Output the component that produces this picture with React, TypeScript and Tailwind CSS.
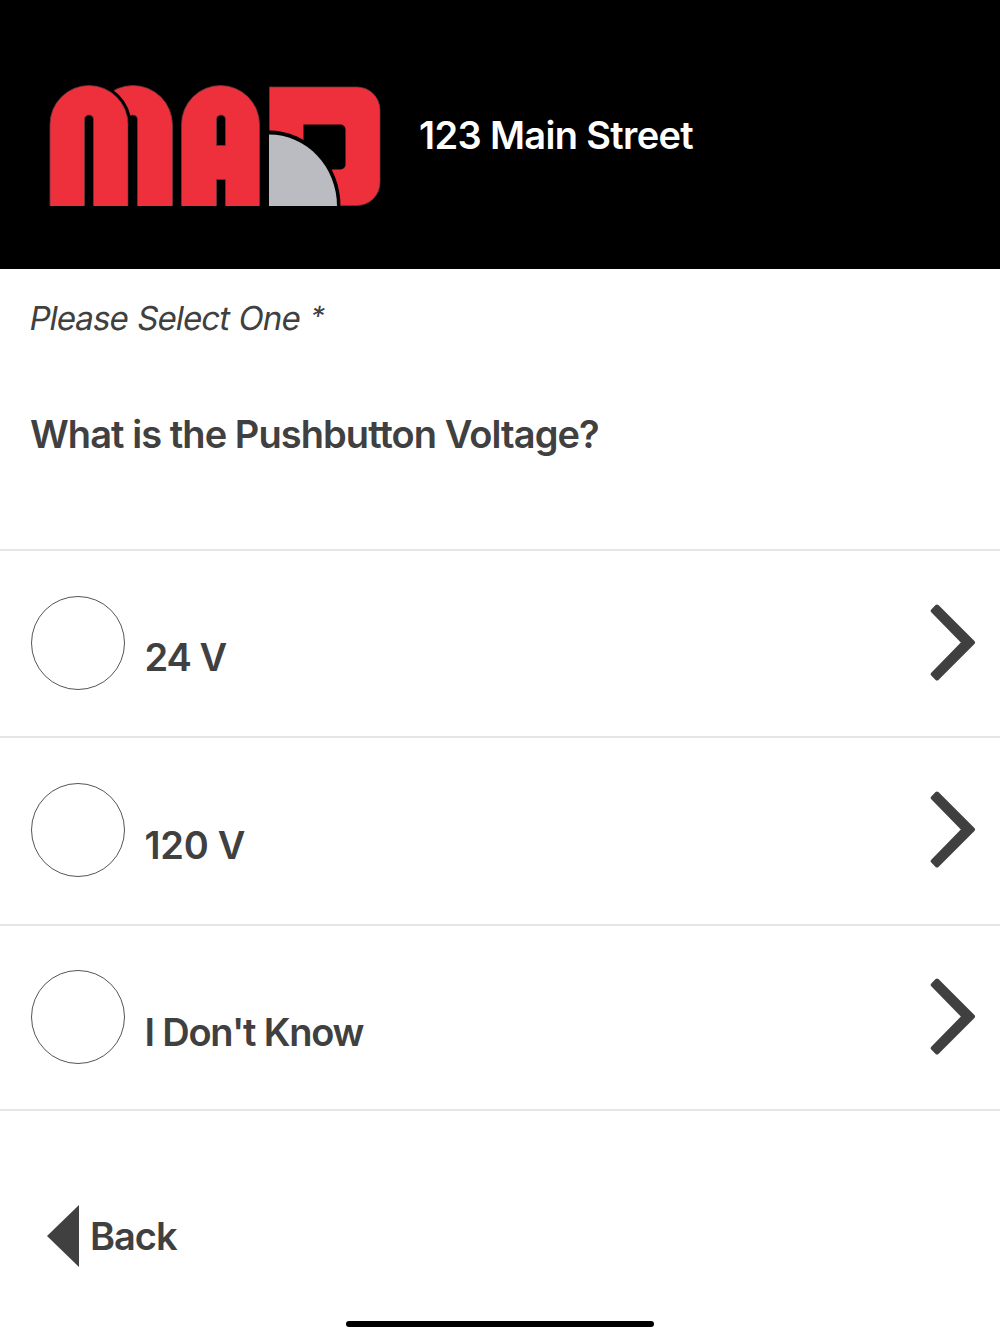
const options = [
  { label: "24 V", tracking: "tracking-[-1px]" },
  { label: "120 V", tracking: "tracking-[-0.3px]" },
  { label: "I Don't Know", tracking: "tracking-[-1.2px]" },
];

function Logo() {
  return (
    <svg viewBox="0 0 332 122" className="h-[122px] w-[332px] shrink-0">
      <defs>
        <clipPath id="logo-base">
          <rect width="332" height="121" />
        </clipPath>
        <clipPath id="logo-block">
          <rect x="220" width="112" height="121" />
        </clipPath>
      </defs>
      <g clipPath="url(#logo-base)" fill="#ee303c" stroke="#6b3a3e" strokeWidth="0.8">
        {/* double arch */}
        <rect x="44.5" y="0.5" width="79" height="180" rx="39.5" />
        <rect x="79" y="30" width="9.5" height="100" rx="4.5" fill="#000" />
        <circle cx="40" cy="40" r="42.5" fill="#000" stroke="none" />
        <rect x="1" y="0.5" width="78" height="180" rx="39" />
        <rect x="79.4" y="40" width="3" height="90" fill="#000" stroke="none" />
        <rect x="35.5" y="30" width="9" height="100" rx="4.5" fill="#000" />

        {/* single arch */}
        <rect x="132.5" y="0.5" width="78" height="180" rx="39" />
        <path d="M167.5 60.5V34.5a4.5 4.5 0 0 1 9 0v26z" fill="#000" />
        <rect x="167.5" y="94.5" width="9" height="40" fill="#000" />
      </g>

      {/* block with quarter disc */}
      <g clipPath="url(#logo-block)">
        <path
          d="M220.5 2H308a23 23 0 0 1 23 23v72.5a23 23 0 0 1-23 23h-87.5z"
          fill="#ee303c"
          stroke="#6b3a3e"
          strokeWidth="0.8"
        />
        <path d="M254.5 39.5h37a5 5 0 0 1 5 5v35a5 5 0 0 1-5 5h-37z" />
        <ellipse cx="220" cy="121" rx="71.5" ry="75.5" />
        <ellipse cx="220" cy="121" rx="68" ry="71.5" fill="#bbbcc1" />
      </g>
    </svg>
  );
}

function Chevron() {
  return (
    <svg viewBox="0 0 46 78" className="h-[78px] w-[46px]">
      <path
        d="M7 2.5 43 38.500 7 74.500 2.700 70.200 33.700 38.500 2.700 6.800z"
        fill="#404040"
        stroke="#404040"
        strokeWidth="4"
        strokeLinejoin="round"
      />
    </svg>
  );
}

export default function App() {
  return (
    <div className="flex h-[1334px] w-[1000px] flex-col overflow-hidden bg-white font-['Inter',sans-serif] text-[38px] font-semibold text-[#404040]">
      <header className="flex h-[269px] shrink-0 items-start bg-black pl-[49px] pt-[85px]">
        <Logo />
        <h1 className="ml-[38px] mt-[22px] whitespace-nowrap leading-[56px] tracking-[-0.65px] text-white">
          123 Main Street
        </h1>
      </header>

      <main className="shrink-0">
        <p className="ml-[30px] flex h-[74px] items-start pt-[25px] text-[33px] font-normal leading-[48px]">
          <span className="-skew-x-10 whitespace-nowrap tracking-[-0.9px] [word-spacing:1px]">
            Please Select One
          </span>
          <span className="-mt-[2px] ml-[11px] -skew-x-10 text-[28px]">*</span>
        </p>
        <h2 className="ml-[30px] mt-[63px] h-[143px] whitespace-nowrap leading-[56px] tracking-[-0.93px]">
          What is the Pushbutton Voltage?
        </h2>
        <ul className="border-b-2 border-[#e5e5e5]">
          {options.map(({ label, tracking }) => (
            <li
              key={label}
              className="flex h-[187.3px] items-center border-t-2 border-[#e5e5e5] pb-[1.5px] pl-[31px] pr-[24px] last:h-[185.5px] last:pb-0"
            >
              <span className="size-[94px] shrink-0 rounded-full border border-[#555]" />
              <span className={`ml-[19.5px] mt-[30px] flex-1 ${tracking}`}>{label}</span>
              <Chevron />
            </li>
          ))}
        </ul>
      </main>

      <button className="ml-[47px] mt-[93px] flex h-[64px] shrink-0 items-center gap-[11px] self-start">
        <svg viewBox="0 0 32 62" className="h-[62px] w-[32px]">
          <path d="M0 31 32 0v62z" fill="#404040" />
        </svg>
        <span className="tracking-[-1px]">Back</span>
      </button>

      <div className="mb-[7px] mt-auto h-[6px] w-[308px] shrink-0 self-center rounded-full bg-black" />
    </div>
  );
}
